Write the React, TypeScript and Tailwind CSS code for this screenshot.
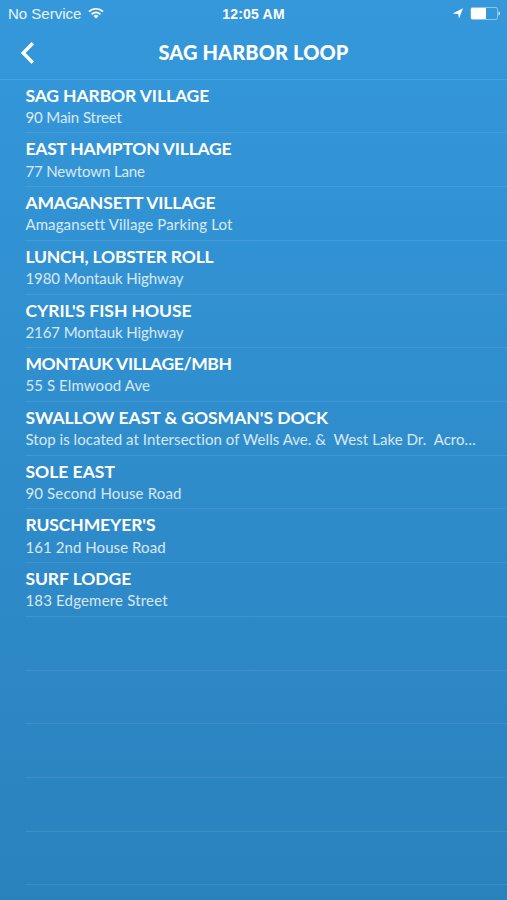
type Stop = { name: string; address: string; nameTracking: string; addressTracking: string };

const stops: Stop[] = [
  { name: "SAG HARBOR VILLAGE", address: "90 Main Street", nameTracking: "tracking-[-0.1px]", addressTracking: "tracking-[-0.09px]" },
  { name: "EAST HAMPTON VILLAGE", address: "77 Newtown Lane", nameTracking: "tracking-[-0.22px]", addressTracking: "tracking-[-0.12px]" },
  { name: "AMAGANSETT VILLAGE", address: "Amagansett Village Parking Lot", nameTracking: "tracking-[-0.14px]", addressTracking: "tracking-[0.12px]" },
  { name: "LUNCH, LOBSTER ROLL", address: "1980 Montauk Highway", nameTracking: "tracking-[-0.21px]", addressTracking: "tracking-[-0.07px]" },
  { name: "CYRIL'S FISH HOUSE", address: "2167 Montauk Highway", nameTracking: "tracking-[-0.04px]", addressTracking: "tracking-[-0.07px]" },
  { name: "MONTAUK VILLAGE/MBH", address: "55 S Elmwood Ave", nameTracking: "tracking-[-0.39px]", addressTracking: "tracking-[0.1px]" },
  { name: "SWALLOW EAST & GOSMAN'S DOCK", address: "Stop is located at Intersection of Wells Ave. &  West Lake Dr.  Acro…", nameTracking: "tracking-[-0.03px]", addressTracking: "tracking-[0.05px]" },
  { name: "SOLE EAST", address: "90 Second House Road", nameTracking: "tracking-[0.01px]", addressTracking: "tracking-[0.16px]" },
  { name: "RUSCHMEYER'S", address: "161 2nd House Road", nameTracking: "tracking-[-0.11px]", addressTracking: "tracking-[0.08px]" },
  { name: "SURF LODGE", address: "183 Edgemere Street", nameTracking: "tracking-[-0.06px]", addressTracking: "tracking-[0.18px]" },
];

const emptyRows = [0, 1, 2, 3, 4];

function StatusBar() {
  return (
    <div className="grid h-7 grid-cols-3 items-center pl-[7px] pr-[7px] font-['Liberation_Sans',sans-serif]">
      <div className="flex items-center gap-[7px] pl-px">
        <span className="text-[15px] leading-7 text-white/90">No Service</span>
        <svg className="-mt-[2px] h-[12px] w-[16px]" viewBox="0 0 16 12" fill="none" stroke="white" strokeWidth="1.7">
          <path d="M1 4.6a10 10 0 0 1 14 0" />
          <path d="M3.6 7.3a6.2 6.2 0 0 1 8.8 0" />
          <path d="M8 11.4 5.5 9a3.6 3.6 0 0 1 5 0Z" fill="white" stroke="none" />
        </svg>
      </div>
      <span className="text-center text-[14px] font-bold leading-7 tracking-[0.2px]">12:05 AM</span>
      <div className="-mr-px flex items-center justify-end gap-[6px]">
        <svg className="-mt-px h-[11px] w-[12px]" viewBox="0 0 12 11" fill="white">
          <path d="M11 .3 7 10.6 6.2 5.9.6 5.4Z" />
        </svg>
        <svg className="-mt-px h-[13px] w-[31px]" viewBox="0 0 31 13">
          <rect x="1" y="0.5" width="26.5" height="12" rx="1.6" fill="none" stroke="white" strokeOpacity="0.55" strokeWidth="0.8" />
          <path d="M2 1h14v11H2a1 1 0 0 1-1-1V2a1 1 0 0 1 1-1Z" fill="white" />
          <path d="M28.6 4.4a2.3 2.3 0 0 1 0 4.2Z" fill="white" />
        </svg>
      </div>
    </div>
  );
}

function NavBar() {
  return (
    <div className="grid h-[51px] grid-cols-[64px_1fr_64px] items-start">
      <button className="pl-[20px] pt-[14px]" aria-label="Back">
        <svg className="block h-[22px] w-[15px]" viewBox="0 0 15 22" fill="none" stroke="white" strokeWidth="3.4">
          <path d="M12.8 1.3 3.2 11l9.6 9.7" />
        </svg>
      </button>
      <h1 className="text-center text-[20px] font-black leading-[49px] tracking-[0.12px]">SAG HARBOR LOOP</h1>
    </div>
  );
}

export default function App() {
  return (
    <div className="flex h-[900px] w-full flex-col overflow-hidden bg-linear-to-b from-[#3498db] to-[#2a82bd] font-['Lato',sans-serif] text-white">
      <StatusBar />
      <NavBar />
      <div className="h-px w-full shrink-0 bg-[#45a4e1]" />
      <ul className="-mt-[0.3px]">
        {stops.map((s) => (
          <li key={s.name} className="ml-[25px] h-[53.73px] whitespace-pre border-b border-white/9 pl-[0.4px] pt-[4px]">
            <div className={`h-[23.1px] text-[17.5px] font-bold leading-[23px] ${s.nameTracking}`}>{s.name}</div>
            <div className={`text-[15px] leading-[21px] text-white/80 ${s.addressTracking}`}>{s.address}</div>
          </li>
        ))}
        {emptyRows.map((row) => (
          <li key={row} className="ml-[25px] h-[53.73px] border-b border-white/9" />
        ))}
      </ul>
    </div>
  );
}
